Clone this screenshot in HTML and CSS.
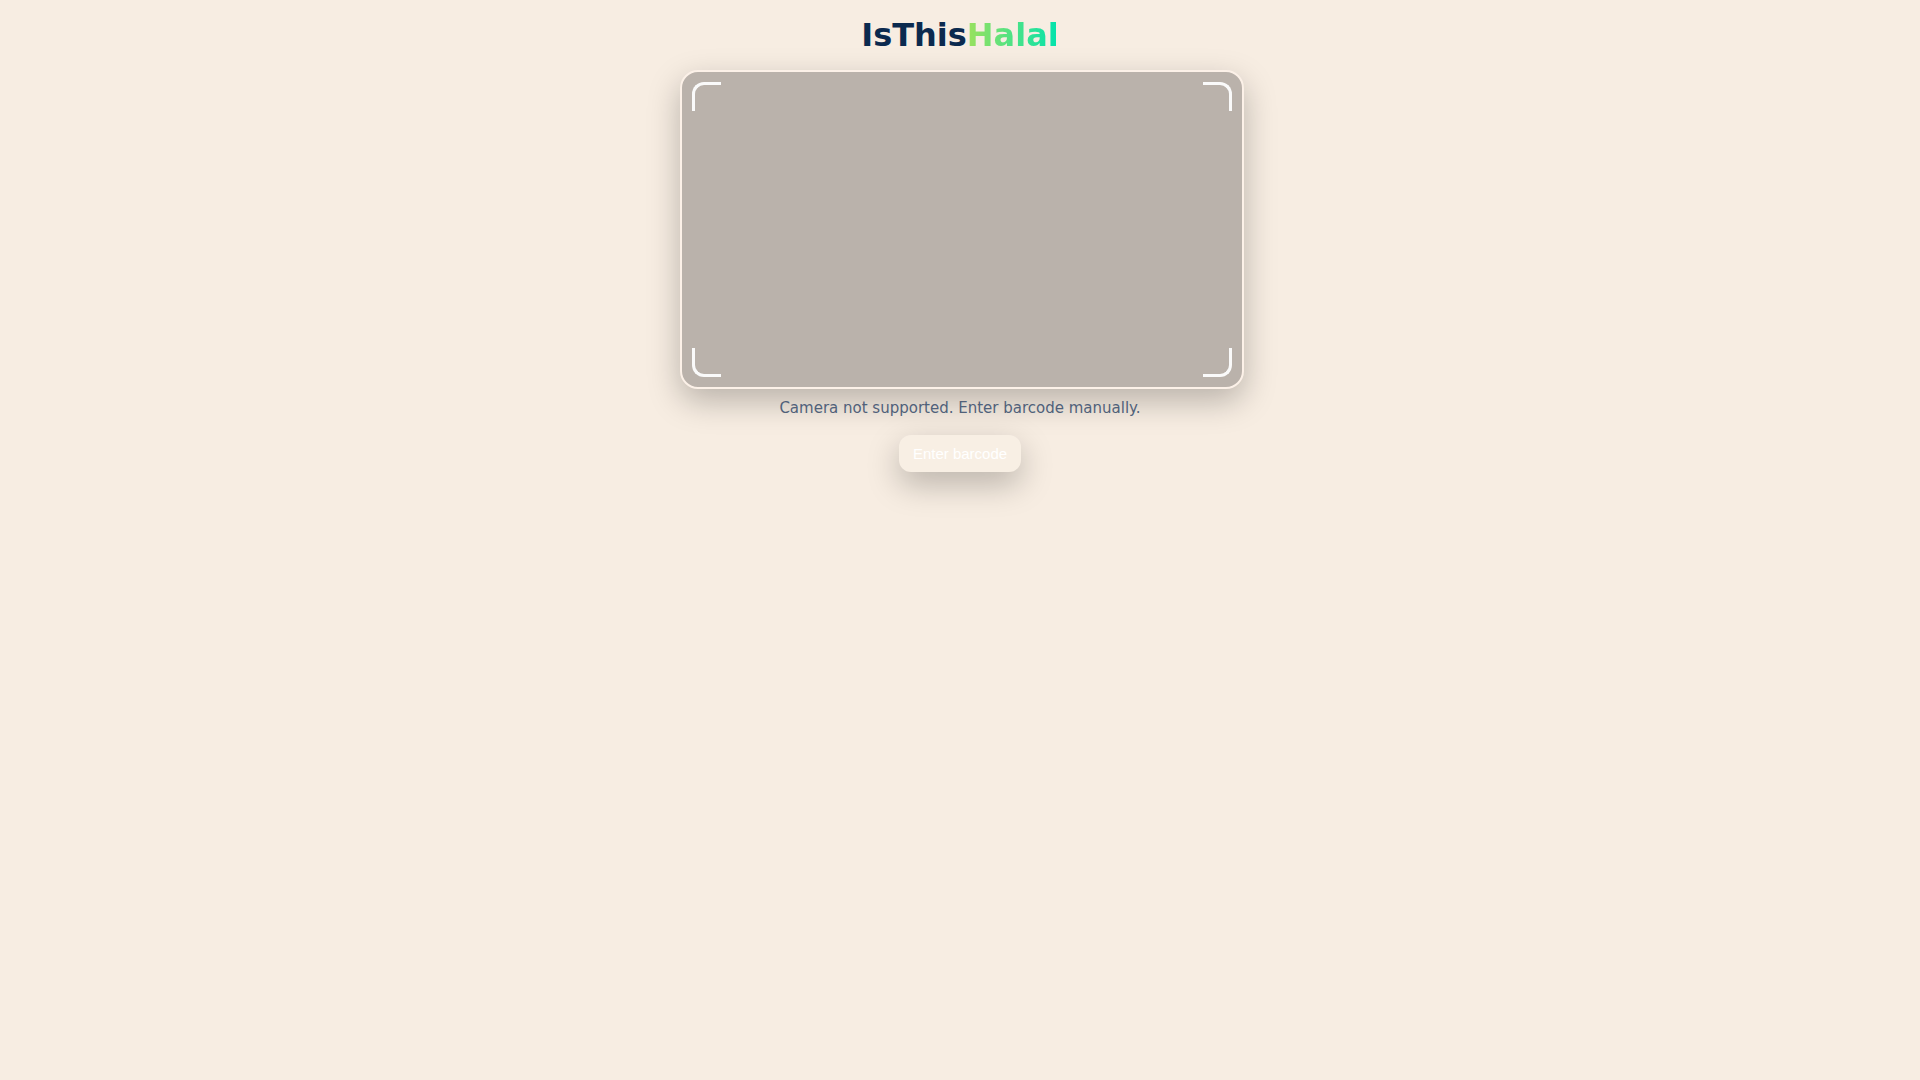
FILE: index.html
```html
<!DOCTYPE html>
<html lang="en">
  <head>
    <meta charset="utf-8" />
    <meta name="viewport" content="width=device-width, initial-scale=1" />
    <title>IsThisHalal</title>
    <link rel="stylesheet" href="styles.css">
  </head>
  <body>
    <main class="app">
      <h1 class="brand">IsThis<span class="brand-accent">Halal</span></h1>

      <div class="scanner">
        <div class="viewport">
          <span class="corner top-left"></span>
          <span class="corner top-right"></span>
          <span class="corner bottom-left"></span>
          <span class="corner bottom-right"></span>
        </div>
      </div>

      <p class="status">Camera not supported. Enter barcode manually.</p>

      <button type="button" class="btn">Enter barcode</button>
    </main>
  </body>
</html>
```

FILE: styles.css
```css
/* || Base */

body {
  margin: 0;
  min-height: 100vh;
  font-family: "DejaVu Sans", sans-serif;
  color: #0b2a4f;
  background-color: #f7ede2;
}

.app {
  display: flex;
  flex-direction: column;
  align-items: center;
  padding: 16px;
}

/* || Title */

.brand {
  margin: 0;
  font-size: 32px;
  line-height: 38px;
  font-weight: 800;
}

.brand-accent {
  color: transparent;
  background: linear-gradient(90deg, #9be15d, #00e3ae);
  -webkit-background-clip: text;
  background-clip: text;
}

/* || Scanner */

.scanner {
  width: 100%;
  max-width: 560px;
  margin-top: 16px;
}

.viewport {
  position: relative;
  width: 100%;
  aspect-ratio: 16 / 9;
  border: 2px solid #fcf1e8;
  border-radius: 18px;
  background-color: #bab2ab;
  box-shadow: 0 12px 32px rgba(0, 0, 0, 0.25);
}

.corner {
  position: absolute;
  width: 26px;
  height: 26px;
  border: 0 solid #fafafa;
}

.top-left {
  top: 10px;
  left: 10px;
  border-width: 3px 0 0 3px;
  border-top-left-radius: 12px;
}

.top-right {
  top: 10px;
  right: 10px;
  border-width: 3px 3px 0 0;
  border-top-right-radius: 12px;
}

.bottom-left {
  bottom: 10px;
  left: 10px;
  border-width: 0 0 3px 3px;
  border-bottom-left-radius: 12px;
}

.bottom-right {
  right: 10px;
  bottom: 10px;
  border-width: 0 3px 3px 0;
  border-bottom-right-radius: 12px;
}

/* || Status and action */

.status {
  position: relative;
  margin: 10px 0 18px;
  font-size: 15px;
  line-height: 18px;
  color: #50617a;
}

.btn {
  padding: 10px 14px;
  border: none;
  border-radius: 12px;
  font-family: "Liberation Sans", Arial, sans-serif;
  font-size: 15px;
  line-height: 17px;
  color: #fff;
  background-color: #f8efe4;
  box-shadow: 0 12px 32px rgba(0, 0, 0, 0.25);
  cursor: pointer;
}
```
